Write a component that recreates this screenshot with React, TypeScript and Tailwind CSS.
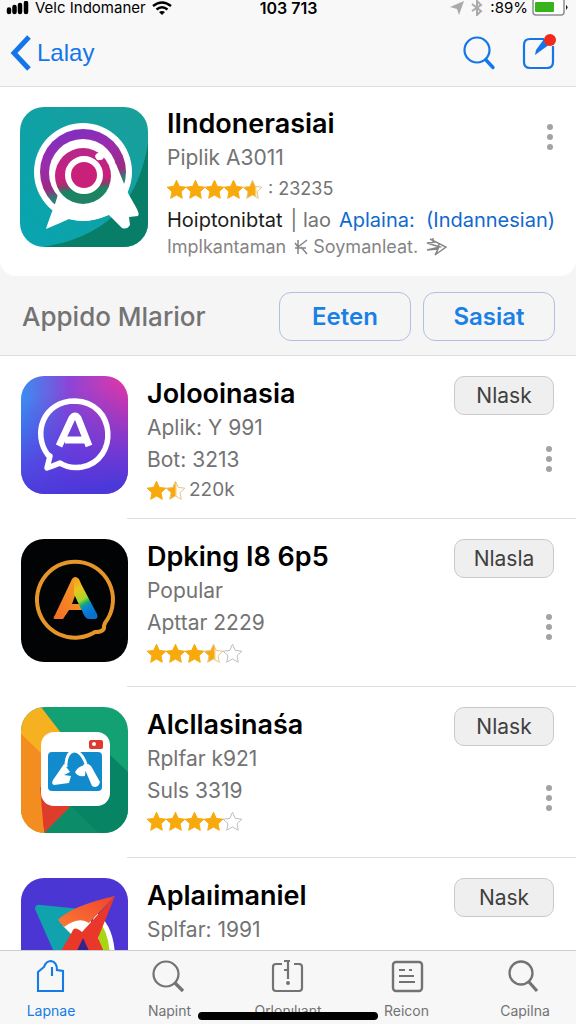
import { useId, type ReactNode } from "react";

const STAR = "M10 0.8 12.8 6.9 19.4 7.7 14.5 12.2 15.8 18.8 10 15.5 4.2 18.8 5.5 12.2 0.6 7.7 7.2 6.9Z";

function Stars({ values }: { values: number[] }) {
  const id = useId();
  return (
    <span className="flex" role="img" aria-label={`${values.reduce((a, b) => a + b, 0)} stars`}>
      {values.map((value, i) => (
        <svg key={i} viewBox="0.5 0.5 19 19" className="size-[19px]">
          <defs>
            <linearGradient id={`${id}-${i}`}>
              <stop offset={value} stopColor="#f8a90c" />
              <stop offset={value === 1 ? 1 : value + 0.15} stopColor={value === 1 ? "#f8a90c" : "#ffffff"} />
            </linearGradient>
          </defs>
          <path
            d={STAR}
            fill={value === 0 ? "#ffffff" : `url(#${id}-${i})`}
            stroke={value === 1 ? "#f8a90c" : value === 0 ? "#bdbdbd" : "#e6c684"}
            strokeWidth="1"
            strokeLinejoin="round"
          />
        </svg>
      ))}
    </span>
  );
}

function Dots({ label }: { label: string }) {
  return (
    <button type="button" aria-label={label} className="flex w-[10px] flex-col items-center gap-[4px]">
      <i className="size-[6px] rounded-full bg-[#a3a3a3]" />
      <i className="size-[6px] rounded-full bg-[#a3a3a3]" />
      <i className="size-[6px] rounded-full bg-[#a3a3a3]" />
    </button>
  );
}

function CameraIcon() {
  return (
    <svg viewBox="0 0 128 140" className="h-[140px] w-32 shrink-0 rounded-[24px]" aria-hidden="true">
      <defs>
        <linearGradient id="cam-bg" x1="0" y1="1" x2="1" y2="0">
          <stop offset="0" stopColor="#08a5b1" />
          <stop offset=".5" stopColor="#10a1a5" />
          <stop offset="1" stopColor="#1a9f99" />
        </linearGradient>
        <linearGradient id="cam-outer" x1=".2" y1="0" x2=".5" y2="1">
          <stop offset="0" stopColor="#7b2fc4" />
          <stop offset=".35" stopColor="#9a2cac" />
          <stop offset=".62" stopColor="#9a2b82" />
          <stop offset=".74" stopColor="#2b7f76" />
          <stop offset="1" stopColor="#12866c" />
        </linearGradient>
        <linearGradient id="cam-inner" x1=".35" y1="0" x2=".45" y2="1">
          <stop offset="0" stopColor="#b7268c" />
          <stop offset=".55" stopColor="#c9217a" />
          <stop offset=".68" stopColor="#8b3c6c" />
          <stop offset=".76" stopColor="#188660" />
          <stop offset="1" stopColor="#248067" />
        </linearGradient>
      </defs>
      <rect width="128" height="140" fill="url(#cam-bg)" />
      <path d="M128 36C119 91 91 129 23 140H128Z" fill="#087e69" />
      <circle cx="63" cy="65" r="49" fill="#fff" />
      <circle cx="63" cy="65" r="43" fill="url(#cam-outer)" />
      <path d="M39 82C37 95 30 108 26 122Q38 117 49 112Q68 117 89 108L102 121Q107 123 110 118L109 110 118 109C121 106 113 96 107 84L96 57Z" fill="#fff" />
      <circle cx="63" cy="66" r="34" fill="#fff" />
      <circle cx="63" cy="69" r="28" fill="url(#cam-inner)" />
      <circle cx="64" cy="68" r="16" fill="#c9217a" stroke="#fff" strokeWidth="6" />
      <path d="M75 49Q77 45 81 46L84 49Q84 53 80 53Q76 54 75 49Z" fill="#fff" />
    </svg>
  );
}

function ChatIcon() {
  return (
    <svg viewBox="0 0 107 118" className="h-[118px] w-[107px] rounded-[23px]" aria-hidden="true">
      <defs>
        <linearGradient id="chat-a" x1="0" y1="0" x2="1" y2="0">
          <stop offset="0" stopColor="#398df2" />
          <stop offset=".45" stopColor="#8b45d6" />
          <stop offset="1" stopColor="#e535a5" />
        </linearGradient>
        <linearGradient id="chat-b" x1=".3" y1="0" x2=".45" y2="1">
          <stop offset=".15" stopColor="#443ddf" stopOpacity="0" />
          <stop offset=".7" stopColor="#5438df" stopOpacity=".75" />
          <stop offset="1" stopColor="#4a38d9" />
        </linearGradient>
      </defs>
      <rect width="107" height="118" fill="url(#chat-a)" />
      <rect width="107" height="118" fill="url(#chat-b)" />
      <path d="M27 79C11 58 22 25 54 25C95 26 98 84 61 91Q48 93 39 87Q32 90 26 92L29 80Z" fill="none" stroke="#fff" strokeWidth="5.500" strokeLinejoin="round" />
      <path d="M38 70 51 42Q54 38 57 42L68 70M44 64H63" fill="none" stroke="#fff" strokeWidth="7" strokeLinecap="butt" strokeLinejoin="round" />
    </svg>
  );
}

function RainbowIcon() {
  return (
    <svg viewBox="0 0 107 123" className="h-[123px] w-[107px] rounded-[23px]" aria-hidden="true">
      <defs>
        <linearGradient id="rain-left" x1="1" y1="0" x2="0" y2="1">
          <stop offset="0" stopColor="#f4a326" />
          <stop offset="1" stopColor="#f46b24" />
        </linearGradient>
        <linearGradient id="rain-right" x1="0" y1="0" x2=".35" y2="1">
          <stop offset="0" stopColor="#f49b22" />
          <stop offset=".3" stopColor="#ecc51d" />
          <stop offset=".58" stopColor="#a4d728" />
          <stop offset=".7" stopColor="#16a873" />
          <stop offset=".8" stopColor="#0985d4" />
          <stop offset="1" stopColor="#0873cf" />
        </linearGradient>
      </defs>
      <rect width="107" height="123" fill="#020304" />
      <path d="M84 84A38 38 0 1 0 74 93Q84 93 83 87Z" fill="none" stroke="#e69528" strokeWidth="4" strokeLinejoin="round" />
      <path d="M51 40Q54 36 58 40L62 50 55 54 51 65H62V71H48L42 80H34Q31 80 34 76Z" fill="url(#rain-left)" />
      <path d="M53 40Q56 37 59 43L76 75Q78 80 73 80H68Q65 80 63 76L53 55Z" fill="url(#rain-right)" />
    </svg>
  );
}

function PhotoIcon() {
  return (
    <svg viewBox="0 0 107 126" className="h-[126px] w-[107px] rounded-[24px]" aria-hidden="true">
      <rect width="107" height="126" fill="#13a174" />
      <path d="M86 45 107 65V126H70L45 98Z" fill="#078463" />
      <path d="M23 126 49 98 78 126Z" fill="#0c8c68" />
      <path d="M0 0H20L47 35V85L23 126H0Z" fill="#f5b11f" />
      <path d="M0 27 24 52V126L0 27Z" fill="#f47c22" />
      <path d="M0 27 22 48V126Q9 126 0 110Z" fill="#f38d20" />
      <path d="M19 80 49 100 23 126Z" fill="#df3d2b" />
      <rect x="20" y="25" width="69" height="74" rx="13" fill="#fff" />
      <rect x="27" y="45" width="54" height="39" rx="4" fill="#128bcd" />
      <rect x="68" y="33" width="14" height="9" rx="2" fill="#dd3a32" />
      <circle cx="73" cy="37" r="2" fill="#fff" />
      <path d="M45 60C44 42 58 37 65 57" fill="none" stroke="#fff" strokeWidth="3" />
      <path d="M43 57 49 65 43 68 50 69 48 76 33 78Q30 77 32 73ZM54 65Q57 59 65 58L64 69Q56 70 54 65ZM62 58Q66 55 70 59L79 75Q77 82 71 79Z" fill="#fff" />
    </svg>
  );
}

function ArrowIcon() {
  return (
    <svg viewBox="0 0 107 125" className="h-[125px] w-[107px] rounded-[23px]" aria-hidden="true">
      <defs>
        <linearGradient id="arrow-bg" x1="0" y1="0" x2="1" y2="1">
          <stop offset="0" stopColor="#4936d2" />
          <stop offset="1" stopColor="#5036d5" />
        </linearGradient>
        <linearGradient id="arrow-orange" x1="0" y1="1" x2="1" y2="0">
          <stop offset="0" stopColor="#fc7a35" />
          <stop offset="1" stopColor="#ef432c" />
        </linearGradient>
      </defs>
      <rect width="107" height="125" fill="url(#arrow-bg)" />
      <path d="M74 34Q96 48 94 90H60Z" fill="#fff" />
      <path d="M78 44Q90 56 89 90H76Z" fill="#a9d511" />
      <path d="M14 31Q14 26 20 27L70 32 40 90Z" fill="#10a3ae" />
      <path d="M42 48Q54 37 70 43V56H50Z" fill="#fff" />
      <path d="M61 56 78 90H42Z" fill="#35228f" />
      <path d="M94 18 77 60 90 90H76L62 60 48 90H30L51 54Q53 47 61 54Z" fill="#e9372a" />
      <path d="M94 18Q50 28 37 42L43 49Q58 38 68 45Z" fill="url(#arrow-orange)" />
    </svg>
  );
}

type AppRow = { title: string; lines: string[]; stars: number[]; count?: string; action: string; icon: ReactNode };

const rows: AppRow[] = [
  { title: "Jolooinasia", lines: ["Aplik: Y 991", "Bot: 3213"], stars: [1, 0.45], count: "220k", action: "Nlask", icon: <ChatIcon /> },
  { title: "Dpking I8 6p5", lines: ["Popular", "Apttar 2229"], stars: [1, 1, 1, 0.5, 0], action: "Nlasla", icon: <RainbowIcon /> },
  { title: "Alcllasinaśa", lines: ["Rplfar k921", "Suls 3319"], stars: [1, 1, 1, 1, 0], action: "Nlask", icon: <PhotoIcon /> },
  { title: "Aplaıimaniel", lines: ["Splfar: 1991"], stars: [], action: "Nask", icon: <ArrowIcon /> },
];

function SearchGlyph() {
  return (
    <svg viewBox="0 0 34 34" className="size-[34px]" fill="none" stroke="currentColor" aria-hidden="true">
      <circle cx="15" cy="14" r="12.500" strokeWidth="2.200" />
      <path d="m24 24 7 7.500" strokeWidth="3.400" strokeLinecap="round" />
    </svg>
  );
}

const tabs: { label: string; icon: ReactNode }[] = [
  { label: "Lapnae", icon: <path d="M5 32V13L11 8Q13 2 18 2Q24 3 24 11L30 12V32ZM19 8V17" strokeWidth="2.100" /> },
  { label: "Napint", icon: <><circle cx="14" cy="15" r="12.500" strokeWidth="2.200" /><path d="m23 24 8 8" strokeWidth="3.400" /></> },
  { label: "Orlonılıant", icon: <><path d="M12 5H6Q3 5 3 8V29Q3 32 6 32H29Q32 32 32 29V8Q32 5 29 5H24M14 2H20M18 2V20M14 11H18" strokeWidth="2.200" /><circle cx="18" cy="24" r="1" strokeWidth="2" /></> },
  { label: "Reicon", icon: <><rect x="4" y="3" width="29" height="29" rx="3" strokeWidth="2.400" /><path d="M10 11H16M20 11H23M10 17H25M10 23H26" strokeWidth="2.200" /></> },
  { label: "Capilna", icon: <><circle cx="14" cy="14" r="11.500" strokeWidth="2.300" /><path d="m22 23 8 9" strokeWidth="3.200" /></> },
];

export default function App() {
  return (
    <div className="flex h-screen flex-col overflow-hidden bg-white font-['Inter','Liberation_Sans',sans-serif] text-[#737373]">
      <header className="shrink-0 border-b border-[#dedede] bg-[#f8f8f8]">
        <div className="grid h-[14px] grid-cols-3 items-center whitespace-nowrap pr-2 pl-[6px] text-[15px] leading-[14px] text-black">
          <div className="flex items-center gap-[6px]">
            <svg viewBox="0 0 23 14" className="h-[14px] w-[23px]" aria-hidden="true">
              <path d="M3 8.500V11M8.500 6V11M14 4V11M20 2V11" stroke="currentColor" strokeWidth="4.500" strokeLinecap="round" />
            </svg>
            <span>Velc Indomaner</span>
            <svg viewBox="0 0 20 15" className="h-[15px] w-5 shrink-0" fill="none" stroke="currentColor" aria-hidden="true">
              <path d="M1 5Q10-2 19 5M4.500 8.500Q10 4 15.500 8.500" strokeWidth="2.500" />
              <path d="m7 11 3 3 3-3Q10 9 7 11Z" fill="currentColor" stroke="none" />
            </svg>
          </div>
          <div className="pl-[3px] text-center text-[16px] font-semibold">103 713</div>
          <div className="flex items-center justify-end gap-[4px]">
            <svg viewBox="0 0 14 14" className="size-[14px]" aria-hidden="true">
              <path d="M14 0 9 14 7 8 0 6Z" fill="#aaa" />
            </svg>
            <svg viewBox="0 0 14 16" className="h-4 w-[18px]" fill="none" stroke="#aaa" strokeWidth="2" aria-hidden="true">
              <path d="m2 4 9 7-4 4V1l4 4-9 6" />
            </svg>
            <span>:89%</span>
            <svg viewBox="0 0 36 16" className="h-4 w-9 shrink-0" aria-hidden="true">
              <rect x="1" y="-2" width="31" height="17" rx="3" fill="#fff" stroke="#8e8e8e" strokeWidth="1.500" />
              <rect x="3" y="2" width="19" height="10" rx="1" fill="#39b31c" />
              <path d="M34 5Q37 7 34 10Z" fill="#222" />
            </svg>
          </div>
        </div>
        <div className="flex h-[72px] items-center justify-between pt-[6px] pr-[20px] pl-[10px] text-[#1476e8]">
          <a href="#back" className="flex items-center gap-[6px] font-['Liberation_Sans',sans-serif] text-[24px] leading-8">
            <svg viewBox="0 0 21 36" className="h-9 w-[21px]" fill="none" stroke="currentColor" strokeWidth="5" aria-hidden="true">
              <path d="M19 2 4 18l15 16" />
            </svg>
            Lalay
          </a>
          <div className="flex items-center gap-[26px]">
            <button type="button" aria-label="Search"><SearchGlyph /></button>
            <button type="button" aria-label="Compose">
              <svg viewBox="0 0 34 38" className="h-[38px] w-[34px]" fill="none" aria-hidden="true">
                <path d="M22 5H8Q2 5 2 11V28Q2 34 8 34H25Q31 34 31 28V12" stroke="currentColor" strokeWidth="2.200" />
                <path d="m13 21 1-5 8-11 6 5Z" fill="currentColor" />
                <circle cx="28" cy="6" r="6" fill="#f02a1c" />
              </svg>
            </button>
          </div>
        </div>
      </header>

      <main className="flex min-h-0 flex-1 flex-col overflow-hidden">
        <div className="shrink-0 border-b border-[#dedede] bg-[#f5f5f6]">
          <section className="flex gap-[19px] rounded-b-2xl bg-white pt-5 pr-[21px] pb-[19px] pl-5">
            <CameraIcon />
            <div className="h-[150px] min-w-0 flex-1 whitespace-nowrap">
              <div className="flex justify-between">
                <div>
                  <h1 className="text-[27px] leading-[34px] font-semibold text-black">IIndonerasiai</h1>
                  <p className="text-[21px] leading-[34px]">Piplik A3011</p>
                </div>
                <div className="pt-[17px]"><Dots label="More about IIndonerasiai" /></div>
              </div>
              <p className="flex items-center gap-[6px] text-[18px] leading-[28px]">
                <Stars values={[1, 1, 1, 1, 0.6]} />: 23235
              </p>
              <p className="flex justify-between text-[20px] leading-[34px]">
                <span className="flex gap-2">
                  <span className="text-[#1c1c1c]">Hoiptonibtat</span>
                  <span>| lao</span>
                  <a href="#aplaina" className="text-[#1169cf]">Aplaina:</a>
                </span>
                <a href="#indannesian" className="text-[#1169cf]">(Indannesian)</a>
              </p>
              <p className="flex items-center gap-2 text-[18px] leading-[18px] text-[#858585]">
                Implkantaman
                <span className="flex items-center">
                  <svg viewBox="0 0 14 18" className="h-[18px] w-[14px]" fill="none" stroke="currentColor" strokeWidth="1.500" aria-hidden="true">
                    <path d="M4 2V16M1 5l3 4 9-7M1 10H12M7 9l6 7" />
                  </svg>
                  &nbsp;Soymanleat.
                </span>
                <svg viewBox="0 0 22 20" className="h-5 w-[22px]" fill="none" stroke="currentColor" strokeWidth="1.400" aria-hidden="true">
                  <path d="m4 2 16 8-11 8 3-6-11 1 13-3L1 6l8-1M7 1v5M13 7l-2 8" />
                </svg>
              </p>
            </div>
          </section>
          <section className="flex items-center gap-3 pt-4 pr-[21px] pb-[14px] pl-[22px]">
            <h2 className="flex-1 text-[26px] leading-8 font-medium whitespace-nowrap">Appido Mlarior</h2>
            <button type="button" className="h-[49px] w-[132px] rounded-xl border border-[#b2bfde] text-[24px] leading-8 font-semibold text-[#1980e6]">Eeten</button>
            <button type="button" className="h-[49px] w-[132px] rounded-xl border border-[#b2bfde] text-[24px] leading-8 font-semibold text-[#1980e6]">Sasiat</button>
          </section>
        </div>

        <ul>
          {rows.map((row) => (
            <li key={row.title}>
              <div className="flex gap-[19px] pt-5 pr-[22px] pl-[21px]">
                <div className="shrink-0 pb-6">{row.icon}</div>
                <div className="h-0 flex-1 whitespace-nowrap">
                  <h3 className="text-[27px] leading-9 font-semibold text-black">{row.title}</h3>
                  {row.lines.map((line) => (
                    <p key={line} className="text-[21px] leading-8">{line}</p>
                  ))}
                  {row.stars.length > 0 && (
                    <p className="flex h-7 items-center gap-1 text-[19px] leading-7">
                      <Stars values={row.stars} />
                      {row.count}
                    </p>
                  )}
                </div>
                <div className="flex flex-col items-end justify-between pb-[46px]">
                  <button type="button" className="h-[39px] w-[100px] rounded-[10px] border border-[#cacaca] bg-[#efefef] text-[21px] leading-7 text-[#404040]">{row.action}</button>
                  <Dots label={`More about ${row.title}`} />
                </div>
              </div>
              <hr className="ml-[127px] border-[#dedede]" />
            </li>
          ))}
        </ul>
      </main>

      <nav className="relative flex h-[74px] shrink-0 justify-between border-t border-[#cccccc] bg-[#f7f7f7] px-[7px] pt-2">
        {tabs.map((tab, i) => (
          <a key={tab.label} href={`#tab-${i}`} className={`flex w-[88px] flex-col items-center gap-[6px] text-[14px] leading-5 ${i === 0 ? "text-[#147be7]" : "text-[#737373]"}`}>
            <svg viewBox="0 0 36 36" className="size-[36px]" fill="none" stroke="currentColor" aria-hidden="true">{tab.icon}</svg>
            {tab.label}
          </a>
        ))}
        <div className="absolute bottom-[4px] left-1/2 h-2 w-[180px] -translate-x-1/2 rounded-full bg-black" />
      </nav>
    </div>
  );
}
